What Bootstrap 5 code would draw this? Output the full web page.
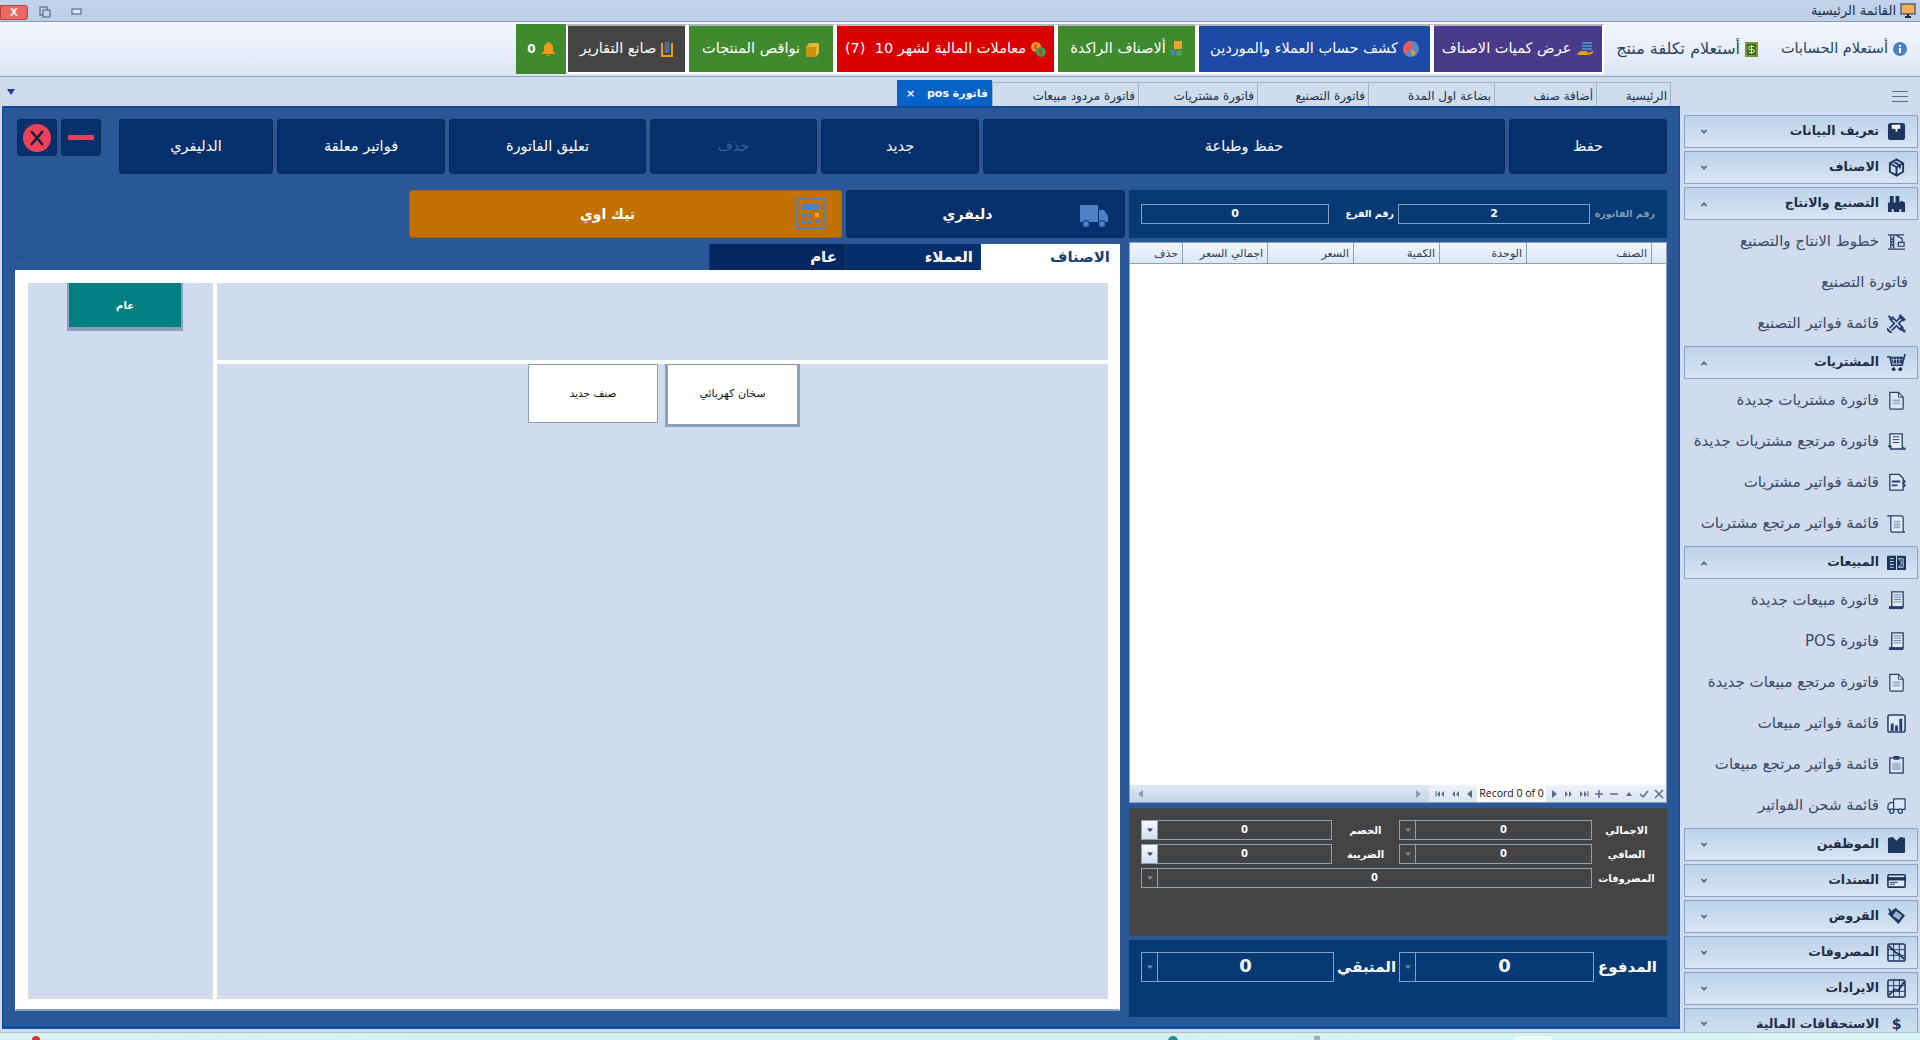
<!doctype html>
<html lang="ar" dir="rtl">
<head>
<meta charset="utf-8">
<title>القائمة الرئيسية</title>
<link href="https://cdn.jsdelivr.net/npm/bootstrap@5.3.0/dist/css/bootstrap.min.css" rel="stylesheet">
<style>
html, body { width: 1920px; height: 1040px; overflow: hidden; }
body { background: #d0dcee; font-family: "DejaVu Sans", "Noto Sans", sans-serif; color: #2a3a5a; }

/* title bar */
.title-bar { height: 22px; background: linear-gradient(#c3d4ea, #bccfe7); border-bottom: 1px solid #8299b9; padding-right: 4px; font-size: 13px; color: #1d2d4a; }
.win-btns { direction: ltr; padding-top: 3px; gap: 11px; }
.win-close { width: 28px; height: 15px; background: #e86a62; border: 1px solid #b8433c; border-radius: 0 3px 3px 0; color: #fff; line-height: 12px; text-align: center; font-size: 11px; font-family: "Liberation Sans", sans-serif; font-weight: 700; }

/* ribbon */
.ribbon { height: 55px; background: linear-gradient(#f4f8fe, #e6eef9 60%, #d9e4f2); border-bottom: 1px solid #8aa0bf; padding-right: 13px; align-items: center; }
.rb-plain { font-size: 14.5px; color: #2b3f5f; gap: 5px; white-space: nowrap; }
.rb-1 { width: 126px; margin-left: 23px; }
.rb-2 { width: 144px; margin-left: 10px; font-size: 16px; }
.rb-btn { height: 50px; color: #fff; font-size: 14.5px; gap: 5px; border: 2px solid #fff; border-top-color: #b5b5b5; white-space: nowrap; justify-content: center; align-items: center; }
.rb-purple { width: 172px; background: #4a3b8a; }
.rb-blue { width: 235px; background: #1c4aa5; }
.rb-green { width: 141px; background: #3f8a2f; }
.rb-red { width: 221px; background: #d80000; }
.rb-green2 { width: 148px; background: #3f8a2f; }
.rb-dark { width: 121px; background: #444; }
.rb-bell { width: 50px; height: 50px; background: #3f8a2f; color: #fff; font-size: 12px; font-weight: 700; gap: 6px; justify-content: center; align-items: center; }

/* work area */
.work-area { height: 955px; }
.main-col { width: 1680px; margin-right: 4px; }
.tabs-strip { height: 29px; align-items: flex-end; padding-right: 9px; }
.tab-strip-end { margin-right: auto; align-self: center; padding-left: 6px; color: #1f3f9a; display: flex; }
.doc-tab { height: 24px; font-size: 12px; color: #20304c; background: #cfdcec; border: 1px solid #9fb2cc; border-bottom: 0; border-right-width: 0; padding: 4px 3px 0 0; white-space: nowrap; }
.doc-tab:first-child { border-right-width: 1px; }
.dt-1 { width: 75px; } .dt-2 { width: 102px; } .dt-3 { width: 126px; } .dt-4 { width: 111px; } .dt-5 { width: 119px; } .dt-6 { width: 146px; }
.doc-tab-on { width: 95px; height: 26px; background: #0563c8; color: #fff; font-weight: 700; font-size: 11px; border: 0; padding: 6px 4px 0 9px; }
.main-panel { height: 923px; background: #2a5795; border: 1px solid #0f4c9f; border-top-width: 2px; border-bottom-width: 3px; padding: 11px 12px 0 12px; margin-left: 2px; }

/* dark buttons */
.tool-row { gap: 4px; height: 55px; margin-bottom: 16px; }
.tool-btn { background: #05306b; color: #fff; border: 1px solid #0a2a5a; border-radius: 3px; font-size: 14.5px; display: flex; align-items: center; justify-content: center; white-space: nowrap; }
.tb-save { width: 158px; } .tb-print { width: 522px; } .tb-new { width: 158px; } .tb-del { width: 167px; color: #35659f; }
.tb-hold { width: 197px; } .tb-held { width: 168px; } .tb-deliv { width: 154px; }
.tb-sq { width: 40px; height: 37px; margin-right: 14px; }
.tb-sq + .tb-sq { margin-right: 0; }

.right-col { width: 538px; gap: 4px; }
.left-col { width: 1110px; margin-right: 4px; }

.inv-box { height: 48px; background: #063a74; color: #fff; padding-right: 12px; align-items: center; font-size: 9.5px; font-weight: 700; }
.inv-lbl1 { width: 65px; color: #8398b3; white-space: nowrap; }
.inv-lbl2 { width: 69px; padding-right: 4px; white-space: nowrap; }
.val-box { border: 1px solid #8aa0bf; color: #fff; text-align: center; font-weight: 700; font-size: 11px; height: 20px; line-height: 18px; font-family: "DejaVu Sans", sans-serif; }
.vb-192 { width: 192px; } .vb-188 { width: 188px; }

.grid-box { height: 561px; background: #fff; border: 1px solid #8aa0bf; }
.grid-head { height: 21px; background: linear-gradient(#f2f6fc, #dce7f5); border-bottom: 1px solid #8aa0bf; font-size: 11px; color: #2a3a5a; }
.gh-cell { border-left: 1px solid #8aa0bf; padding: 3px 4px 0 0; white-space: nowrap; }
.gh-ind { width: 15px; } .gh-item { width: 125px; } .gh-unit { width: 87px; } .gh-qty { width: 86px; } .gh-price { width: 86px; } .gh-total { width: 85px; }
.gh-del { flex-grow: 1; border-left: 0; }
.grid-nav { height: 17px; margin-top: auto; direction: ltr; background: linear-gradient(#dfe8f5, #c5d4e8); color: #5a6c88; }
.nav-scroll { flex-grow: 1; padding: 0 6px; justify-content: space-between; color: #8a9ab2; }
.nav-btns { background: linear-gradient(#eef3fa, #d9e4f2); padding-left: 3px; }
.nav-ico { width: 15px; display: flex; justify-content: center; align-items: center; }
.nav-rec { width: 69px; background: #fff; color: #111; font-family: "Open Sans", sans-serif; font-size: 10.5px; text-align: center; line-height: 17px; white-space: nowrap; }

.totals-box { height: 128px; background: #444; color: #fff; padding: 12px 0 0 12px; margin-top: 1px; gap: 4px; font-size: 10px; font-weight: 700; }
.pay-box { height: 77px; background: #063a74; color: #fff; padding: 12px 0 0 12px; font-size: 15px; font-weight: 700; }
.sum-row { height: 20px; align-items: center; }
.lbl-r { width: 75px; padding-right: 6px; text-align: center; white-space: nowrap; }
.lbl-m { width: 67px; text-align: center; white-space: nowrap; }
.spin-box { display: flex; border: 1px solid #8aa0bf; height: 20px; font-size: 10px; }
.spin-val { flex-grow: 1; text-align: center; line-height: 18px; }
.spin-drop { width: 16px; border-right: 1px solid #8aa0bf; display: flex; align-items: center; justify-content: center; color: #7f8b99; }
.spin-on { background: linear-gradient(#f5f8fd, #d3dff0); color: #33445f; }
.sb-193 { width: 193px; } .sb-191 { width: 191px; } .sb-451 { width: 451px; }
.pay-box .spin-box { height: 30px; font-size: 18px; }
.pay-box .spin-val { line-height: 26px; }
.pay-box .lbl-r { width: 73px; }
.pay-box .lbl-m { width: 65px; }
.pay-box .sum-row { height: 30px; }
.sb-195 { width: 195px; } .sb-193b { width: 193px; }

/* buttons above the pos tabs */
.mode-row { gap: 4px; height: 48px; }
.mode-deliv { width: 279px; font-size: 14px; font-weight: 700; position: relative; padding-right: 36px; }
.mode-take { width: 433px; background: #c27000; border-color: #a96300; font-size: 14px; font-weight: 700; position: relative; padding-right: 36px; }
.mode-ico { position: absolute; right: 15px; top: 9px; }
.mode-take .mode-ico { right: 15px; top: 7px; }
.dots-mark { position: absolute; right: 1092px; bottom: 9px; color: #2148a8; font-size: 10px; line-height: 1; }

.pos-tabs { height: 26px; margin-top: 6px; margin-right: 5px; font-size: 15px; font-weight: 700; position: relative; }
.pos-tab { background: #04285f; color: #fff; padding: 0 8px 0 0; border-left: 1px solid #0a3a7c; white-space: nowrap; line-height: 26px; }
.ptab-a { width: 140px; background: #fff; color: #1d3f75; padding-right: 10px; }
.ptab-b { width: 135px; background: #052f6a; padding-right: 7px; }
.ptab-c { width: 136px; }

.pos-panel { height: 741px; margin-right: 5px; background: #fff; border: 1px solid #fff; border-bottom: 2px solid #8aa0bf; padding: 12px 11px 10px 12px; gap: 4px; }
.pos-items { width: 891px; gap: 4px; }
.pos-top { height: 77px; background: #d0dcee; }
.pos-low { flex-grow: 1; background: #d0dcee; padding-left: 3px; gap: 7px; }
.pos-cats { width: 185px; background: #d0dcee; padding-left: 9px; }
.cat-btn { width: 116px; height: 48px; background: #008080; color: #fff; border: 2px solid #8aa0bf; border-top: 0; border-bottom-width: 4px; font-size: 10px; font-weight: 700; display: flex; align-items: center; justify-content: center; }
.prod-btn { background: #fff; border: 1px solid #8aa0bf; font-size: 11px; color: #111; display: flex; align-items: center; justify-content: center; white-space: nowrap; }
.prod-new { width: 130px; height: 59px; font-size: 10.5px; }
.prod-sel { width: 135px; height: 63px; border-width: 0 3px 3px 3px; border-top: 1px solid #8aa0bf; box-shadow: inset 0 0 0 1px #fff; }

/* sidebar */
.side-col { width: 234px; margin-right: 2px; }
.side-top { height: 38px; flex-shrink: 0; direction: ltr; padding-top: 14px; justify-content: flex-end; }
.burger { width: 16px; height: 11px; border-top: 1px solid #5a6c88; border-bottom: 1px solid #5a6c88; position: relative; margin-right: 10px; }
.burger::after { content: ""; position: absolute; left: 0; right: 0; top: 4px; border-top: 1px solid #5a6c88; }
.side-head { height: 33px; margin-bottom: 3px; flex-shrink: 0; background: linear-gradient(#bcd2ea, #d8e6f4); border: 1px solid #8ca2c4; color: #1f2c45; font-size: 12.5px; font-weight: 700; padding-right: 11px; align-items: center; gap: 8px; white-space: nowrap; }
.side-open { margin-bottom: 1px; }
.side-tail { height: 24px; margin-bottom: 0; border-bottom: 0; padding-top: 7px; line-height: 1; background: linear-gradient(#bcd2ea, #cfdff0); }
.side-chev { margin-right: auto; padding-left: 15px; color: #56657f; display: flex; }
.side-item { height: 41px; flex-shrink: 0; font-size: 15px; color: #3a4a68; align-items: center; gap: 8px; padding-right: 12px; white-space: nowrap; }
.side-item-last { margin-bottom: 2px; }
.side-ico { color: #24406e; flex-shrink: 0; }
.side-head .side-ico { color: #1e3560; }
.side-dollar { width: 19px; font-size: 14px; line-height: 14px; text-align: center; }
.no-ico { padding-right: 10px; }
.bottom-strip { height: 8px; background: linear-gradient(90deg, #d6f1f0, #cff2ee 50%, #d8f3f3); border-top: 1px solid #aebfcc; position: relative; overflow: hidden; }
.tray { position: absolute; top: 3px; }
.tray-a { right: 1880px; width: 8px; height: 6px; background: #d9332e; border-radius: 4px 4px 0 0; }
.tray-b { right: 742px; width: 10px; height: 6px; background: #2a8a96; border-radius: 5px 5px 0 0; }
.tray-c { right: 600px; width: 6px; height: 6px; background: #a3aeb4; }
.tray-d { right: 368px; width: 38px; height: 6px; background: #eef9f9; border-radius: 4px 4px 0 0; }
</style>
</head>
<body class="d-flex flex-column">

<svg width="0" height="0" class="position-absolute">
  <symbol id="chev-d" viewBox="0 0 8 8"><path d="M1 2l3 3.5L7 2 4 3.5z" fill="currentColor" stroke="currentColor"/></symbol>
  <symbol id="chev-u" viewBox="0 0 8 8"><path d="M1 6l3-3.5L7 6 4 4.5z" fill="currentColor" stroke="currentColor"/></symbol>
  <symbol id="tri-d" viewBox="0 0 8 8"><path d="M1 2.5h6L4 6z" fill="currentColor"/></symbol>
  <symbol id="i-book" viewBox="0 0 20 20"><rect x="1" y="1" width="18" height="18" rx="3" fill="currentColor"/><path d="M5 3h9v4h-3v3H9V7H5z" fill="#fff"/></symbol>
  <symbol id="i-box" viewBox="0 0 20 20"><path d="M10 1.500l7 4v9l-7 4-7-4v-9zM3 5.500l7 4.200 7-4.200M10 9.700v8.800M6.500 3.500l7 4.200V11" fill="none" stroke="currentColor" stroke-width="2"/></symbol>
  <symbol id="i-factory" viewBox="0 0 20 20"><path d="M1 19V9h2V2h4v7h2V2h4v7l2-2 4 2v10h-4v-3h-2v3H7v-3H5v3z" fill="currentColor"/></symbol>
  <symbol id="i-crane" viewBox="0 0 20 20"><path d="M1 3h17M4 3v14M7 3v14M4 6l3 3-3 3 3 3M9 3l7 4v3M12 11h6v4h-6zM1 18h18" fill="none" stroke="currentColor" stroke-width="1.300"/></symbol>
  <symbol id="i-tools" viewBox="0 0 20 20"><path d="M4 4l12 12M16 4L4 16" stroke="currentColor" stroke-width="5" fill="none"/><path d="M4 4l12 12M16 4L4 16" stroke="#d0dcee" stroke-width="1.600" fill="none"/><path d="M14 0l6 6-3 2-5-5zM0 14l6 6-3 0-3-3zM2 1l5 5-2 1-4-4zM15 13l5 5-2 2-5-5z" fill="currentColor"/></symbol>
  <symbol id="i-cart" viewBox="0 0 20 20"><path d="M0 4h3l2 9h11l3-12" fill="none" stroke="currentColor" stroke-width="1.600"/><path d="M4 4h13l-1 7H6z" fill="currentColor"/><path d="M7 5v6M10 5v6M13 5v6M5 7h11" stroke="#d0dcee" stroke-width=".7"/><circle cx="7" cy="17" r="2" fill="currentColor"/><circle cx="14" cy="17" r="2" fill="currentColor"/></symbol>
  <symbol id="i-doc" viewBox="0 0 20 20"><path d="M3 1.500h9l5 5V18a1 1 0 0 1-1 1H4a1 1 0 0 1-1-1z" fill="#dfe8f5" stroke="currentColor" stroke-width="1.300"/><path d="M12 1.500v5h5" fill="none" stroke="currentColor"/><path d="M6 9h8v2H6zM6 12h8v2H6z" fill="#9aabc4"/></symbol>
  <symbol id="i-roll" viewBox="0 0 20 20"><path d="M3 17V2h13v15" fill="#e4ecf7" stroke="currentColor" stroke-width="1.400"/><path d="M6 5h7M6 8h7M6 11h7" stroke="currentColor" stroke-width="1"/><path d="M1 15h3v3h15l-2-2" fill="none" stroke="currentColor" stroke-width="1.600"/></symbol>
  <symbol id="i-cut" viewBox="0 0 20 20"><path d="M3 1.500h10l4 4V18H3z" fill="#dfe8f5" stroke="currentColor" stroke-width="1.400"/><path d="M5 8h9v2H5zM5 12h6v2H5z" fill="currentColor"/><path d="M17 7l2 2-2 2 2 2-2 2" fill="none" stroke="currentColor" stroke-width="1.500"/></symbol>
  <symbol id="i-scroll" viewBox="0 0 20 20"><path d="M1 2h14a2 2 0 0 1 2 2v13a2 2 0 0 0 2 2H6a2 2 0 0 1-2-2V4a2 2 0 0 0-3-2z" fill="#e4ecf7" stroke="currentColor" stroke-width="1.300"/><path d="M7 7h7v2H7zM7 10h7v2H7zM7 13h7v2H7z" fill="#9aabc4"/></symbol>
  <symbol id="i-sales" viewBox="0 0 20 20"><rect x="0" y="3" width="20" height="15" rx="1" fill="currentColor"/><path d="M3 6h4M3 9h4M3 12h4M3 15h4M12 6h5v9h-5l3-3V9z" stroke="#d0dcee" fill="none"/><path d="M10 3v15" stroke="#d0dcee"/></symbol>
  <symbol id="i-rcpt" viewBox="0 0 20 20"><path d="M5 1h12v16H5z" fill="#e4ecf7" stroke="currentColor" stroke-width="1.400"/><path d="M7 4h8M7 6.500h8M7 9h8M7 11.500h8" stroke="#6c7f9c"/><path d="M2 16h15v3H2z" fill="currentColor"/></symbol>
  <symbol id="i-bars" viewBox="0 0 20 20"><rect x="1" y="1" width="18" height="18" rx="2" fill="#dfe8f5" stroke="currentColor" stroke-width="1.600"/><path d="M4 10h3v8H4zM8.500 12h3v6h-3zM13 5h3v13h-3z" fill="currentColor"/></symbol>
  <symbol id="i-clip" viewBox="0 0 20 20"><rect x="3" y="3" width="14" height="16" fill="#dfe8f5" stroke="currentColor" stroke-width="1.400"/><path d="M7 1h6v4H7z" fill="currentColor"/><path d="M5.500 8h9v8h-9z" fill="#a9b8cf"/></symbol>
  <symbol id="i-truck" viewBox="0 0 20 20"><path d="M7 3h12v11H7zM7 7H3L1 10v4h6z" fill="#dfe8f5" stroke="currentColor" stroke-width="1.300"/><circle cx="5" cy="16" r="2.200" fill="#dfe8f5" stroke="currentColor" stroke-width="1.400"/><circle cx="14" cy="16" r="2.200" fill="#dfe8f5" stroke="currentColor" stroke-width="1.400"/></symbol>
  <symbol id="i-shirt" viewBox="0 0 20 20"><path d="M2 3l4-1 4 4 4-4 4 1a1 1 0 0 1 1 1v14a1 1 0 0 1-1 1H2a1 1 0 0 1-1-1V4a1 1 0 0 1 1-1z" fill="currentColor"/></symbol>
  <symbol id="i-card" viewBox="0 0 20 20"><rect x="1" y="4" width="18" height="13" rx="1" fill="#dfe8f5" stroke="currentColor" stroke-width="1.700"/><path d="M1 7h18v2.500H1zM3 12h8M3 14h5" stroke="currentColor" fill="currentColor"/></symbol>
  <symbol id="i-tag" viewBox="0 0 20 20"><path d="M1 7l8-6 10 8-7 9z" fill="currentColor"/><path d="M4 3L1 1l3 8z" fill="currentColor"/><rect x="7" y="6" width="8" height="6" transform="rotate(35 11 9)" fill="#9fb3d0"/></symbol>
  <symbol id="i-grid1" viewBox="0 0 20 20"><rect x="1" y="1" width="18" height="18" rx="2" fill="none" stroke="currentColor" stroke-width="1.600"/><path d="M7 1v18M13 1v18M1 7h18M1 13h18" stroke="currentColor"/><path d="M2 3l7 7 4 2 5 5" fill="none" stroke="currentColor" stroke-width="2"/></symbol>
  <symbol id="i-grid2" viewBox="0 0 20 20"><rect x="1" y="1" width="18" height="18" rx="2" fill="none" stroke="currentColor" stroke-width="1.600"/><path d="M7 1v18M13 1v18M1 7h18M1 13h18" stroke="currentColor"/><path d="M2 17l6-6 4 1 6-9" fill="none" stroke="currentColor" stroke-width="2"/></symbol>
  <symbol id="nv-first" viewBox="0 0 10 10"><path d="M1 2v6" stroke="currentColor"/><path d="M5 2v6L2 5zM9 2v6L6 5z" fill="currentColor"/></symbol>
  <symbol id="nv-pprev" viewBox="0 0 10 10"><path d="M5 2v6L2 5zM9 2v6L6 5z" fill="currentColor"/></symbol>
  <symbol id="nv-prev" viewBox="0 0 10 10"><path d="M7 1v8L2 5z" fill="currentColor"/></symbol>
  <symbol id="nv-next" viewBox="0 0 10 10"><path d="M3 1v8l5-4z" fill="currentColor"/></symbol>
  <symbol id="nv-pnext" viewBox="0 0 10 10"><path d="M1 2v6l3-3zM5 2v6l3-3z" fill="currentColor"/></symbol>
  <symbol id="nv-last" viewBox="0 0 10 10"><path d="M1 2v6l3-3zM5 2v6l3-3z" fill="currentColor"/><path d="M9 2v6" stroke="currentColor"/></symbol>
</svg>

<div class="title-bar d-flex align-items-center">
  <svg width="16" height="16" viewBox="0 0 16 16" class="ms-1"><rect x="1" y="1" width="14" height="10" fill="#f2b05a" stroke="#1d2d4a"/><path d="M5 14h6M8 11v3" stroke="#1d2d4a" stroke-width="2"/></svg>
  <span>القائمة الرئيسية</span>
  <div class="win-btns d-flex me-auto align-items-center">
    <div class="win-close">X</div>
    <svg width="13" height="12" viewBox="0 0 13 12"><rect x="1" y="1" width="7" height="8" fill="none" stroke="#45566f"/><rect x="4" y="4" width="7" height="7" fill="#c3d4ea" stroke="#45566f"/></svg>
    <svg width="12" height="8" viewBox="0 0 12 8" class="ms-2"><rect x="1" y="1" width="9" height="5" fill="#dde6f2" stroke="#45566f"/></svg>
  </div>
</div>

<div class="ribbon d-flex">
  <div class="rb-plain rb-1 d-flex align-items-center">
    <svg width="14" height="14" viewBox="0 0 14 14" class="flex-shrink-0"><circle cx="7" cy="7" r="7" fill="#4b7fc6"/><path d="M6 3h2v2H6zM6 6h2v5H6z" fill="#fff"/></svg>
    <span>أستعلام الحسابات</span>
  </div>
  <div class="rb-plain rb-2 d-flex align-items-center">
    <svg width="13" height="15" viewBox="0 0 13 15" class="flex-shrink-0"><rect width="13" height="15" fill="#6f9a2e"/><rect x="2" y="2" width="9" height="11" fill="#3d6d1b"/><path d="M4 10.500h4a1 1 0 0 0 0-3H5a1 1 0 0 1 0-3h4M6.500 3v9" fill="none" stroke="#d8e8b0"/></svg>
    <span>أستعلام تكلفة منتج</span>
  </div>
  <div class="rb-btn rb-purple d-flex">
    <svg width="18" height="16" viewBox="0 0 18 16"><path d="M6 1h10v2H6zM6 4h10v2H6zM6 7h10v2H6z" fill="#4f83c8"/><path d="M1 13c3-4 6-3 9-3 2 0 2 2 0 2h-2 4l5-2c1 2-2 4-7 4H3z" fill="#ef9a21"/></svg>
    <span>عرض كميات الاصناف</span>
  </div>
  <div class="rb-btn rb-blue d-flex">
    <svg width="16" height="16" viewBox="0 0 16 16"><circle cx="8" cy="8" r="8" fill="#5c89c4"/><path d="M8 8V0a8 8 0 0 0-6 13z" fill="#ec5a54"/><path d="M8 8l5 4-4 3z" fill="#f0a030"/></svg>
    <span>كشف حساب العملاء والموردين</span>
  </div>
  <div class="rb-btn rb-green d-flex">
    <svg width="12" height="16" viewBox="0 0 12 16"><rect x="3" y="0" width="8" height="8" fill="#f0a32e"/><rect x="0" y="9" width="4" height="5" fill="#4f83c8"/><circle cx="8" cy="12" r="3" fill="#44a060"/></svg>
    <span>ألاصناف الراكدة</span>
  </div>
  <div class="rb-btn rb-red d-flex">
    <svg width="15" height="15" viewBox="0 0 15 15"><circle cx="5" cy="5" r="5" fill="#f0a020"/><circle cx="10" cy="10" r="5" fill="#3f9a50"/><path d="M7 3H4v4h3M3 5h3M11 8h-2v2h2v2H9M10 7v6" fill="none" stroke="#c33" stroke-width="1"/></svg>
    <span>معاملات المالية لشهر 10 &nbsp;(7)</span>
  </div>
  <div class="rb-btn rb-green2 d-flex">
    <svg width="15" height="15" viewBox="0 0 15 15"><path d="M1 5h10v10H1z" fill="#c8930f"/><path d="M1 5l3-4h10l-3 4zM11 5l3-4v10l-3 4z" fill="#e2b83a"/></svg>
    <span>نواقص المنتجات</span>
  </div>
  <div class="rb-btn rb-dark d-flex">
    <svg width="12" height="15" viewBox="0 0 12 15"><path d="M1 1v13h10V1" fill="none" stroke="#f29a17" stroke-width="2"/><rect x="3.500" y="0" width="5" height="11" fill="#4f6d99"/></svg>
    <span>صانع التقارير</span>
  </div>
  <div class="rb-bell d-flex">
    <svg width="13" height="14" viewBox="0 0 13 14"><path d="M6.500 0c1 0 1.500.6 1.500 1.300C10.500 2 11 4 11 6v3l2 2v1H0v-1l2-2V6c0-2 .5-4 3-4.700C5 .6 5.500 0 6.500 0zM5 13h3a1.500 1 0 0 1-3 0z" fill="#f29a17"/></svg>
    <span>0</span>
  </div>
</div>

<div class="work-area d-flex">
  <div class="side-col d-flex flex-column overflow-hidden">
    <div class="side-top d-flex"><div class="burger"></div></div>
    <div class="side-head d-flex"><svg class="side-ico" width="19" height="19"><use href="#i-book"/></svg><span>تعريف البيانات</span><span class="side-chev"><svg width="8" height="8"><use href="#chev-d"/></svg></span></div>
    <div class="side-head d-flex"><svg class="side-ico" width="19" height="19"><use href="#i-box"/></svg><span>الاصناف</span><span class="side-chev"><svg width="8" height="8"><use href="#chev-d"/></svg></span></div>
    <div class="side-head side-open d-flex"><svg class="side-ico" width="19" height="19"><use href="#i-factory"/></svg><span>التصنيع والانتاج</span><span class="side-chev"><svg width="8" height="8"><use href="#chev-u"/></svg></span></div>
    <div class="side-item d-flex"><svg class="side-ico" width="19" height="19"><use href="#i-crane"/></svg><span>خطوط الانتاج والتصنيع</span></div>
    <div class="side-item d-flex no-ico"><span>فاتورة التصنيع</span></div>
    <div class="side-item side-item-last d-flex"><svg class="side-ico" width="19" height="19"><use href="#i-tools"/></svg><span>قائمة فواتير التصنيع</span></div>
    <div class="side-head side-open d-flex"><svg class="side-ico" width="19" height="19"><use href="#i-cart"/></svg><span>المشتريات</span><span class="side-chev"><svg width="8" height="8"><use href="#chev-u"/></svg></span></div>
    <div class="side-item d-flex"><svg class="side-ico" width="19" height="19"><use href="#i-doc"/></svg><span>فاتورة مشتريات جديدة</span></div>
    <div class="side-item d-flex"><svg class="side-ico" width="19" height="19"><use href="#i-roll"/></svg><span>فاتورة مرتجع مشتريات جديدة</span></div>
    <div class="side-item d-flex"><svg class="side-ico" width="19" height="19"><use href="#i-cut"/></svg><span>قائمة فواتير مشتريات</span></div>
    <div class="side-item side-item-last d-flex"><svg class="side-ico" width="19" height="19"><use href="#i-scroll"/></svg><span>قائمة فواتير مرتجع مشتريات</span></div>
    <div class="side-head side-open d-flex"><svg class="side-ico" width="19" height="19"><use href="#i-sales"/></svg><span>المبيعات</span><span class="side-chev"><svg width="8" height="8"><use href="#chev-u"/></svg></span></div>
    <div class="side-item d-flex"><svg class="side-ico" width="19" height="19"><use href="#i-rcpt"/></svg><span>فاتورة مبيعات جديدة</span></div>
    <div class="side-item d-flex"><svg class="side-ico" width="19" height="19"><use href="#i-rcpt"/></svg><span>فاتورة POS</span></div>
    <div class="side-item d-flex"><svg class="side-ico" width="19" height="19"><use href="#i-doc"/></svg><span>فاتورة مرتجع مبيعات جديدة</span></div>
    <div class="side-item d-flex"><svg class="side-ico" width="19" height="19"><use href="#i-bars"/></svg><span>قائمة فواتير مبيعات</span></div>
    <div class="side-item d-flex"><svg class="side-ico" width="19" height="19"><use href="#i-clip"/></svg><span>قائمة فواتير مرتجع مبيعات</span></div>
    <div class="side-item side-item-last d-flex"><svg class="side-ico" width="19" height="19"><use href="#i-truck"/></svg><span>قائمة شحن الفواتير</span></div>
    <div class="side-head d-flex"><svg class="side-ico" width="19" height="19"><use href="#i-shirt"/></svg><span>الموظفين</span><span class="side-chev"><svg width="8" height="8"><use href="#chev-d"/></svg></span></div>
    <div class="side-head d-flex"><svg class="side-ico" width="19" height="19"><use href="#i-card"/></svg><span>السندات</span><span class="side-chev"><svg width="8" height="8"><use href="#chev-d"/></svg></span></div>
    <div class="side-head d-flex"><svg class="side-ico" width="19" height="19"><use href="#i-tag"/></svg><span>القروض</span><span class="side-chev"><svg width="8" height="8"><use href="#chev-d"/></svg></span></div>
    <div class="side-head d-flex"><svg class="side-ico" width="19" height="19"><use href="#i-grid1"/></svg><span>المصروفات</span><span class="side-chev"><svg width="8" height="8"><use href="#chev-d"/></svg></span></div>
    <div class="side-head d-flex"><svg class="side-ico" width="19" height="19"><use href="#i-grid2"/></svg><span>الايرادات</span><span class="side-chev"><svg width="8" height="8"><use href="#chev-d"/></svg></span></div>
    <div class="side-head side-tail d-flex"><span class="side-ico side-dollar fw-bold">$</span><span>الاستحقاقات المالية</span><span class="side-chev"><svg width="8" height="8"><use href="#chev-d"/></svg></span></div>
  </div>

  <div class="main-col d-flex flex-column">
    <div class="tabs-strip d-flex">
      <div class="doc-tab dt-1">الرئيسية</div>
      <div class="doc-tab dt-2">أضافة صنف</div>
      <div class="doc-tab dt-3">بضاعة اول المدة</div>
      <div class="doc-tab dt-4">فاتورة التصنيع</div>
      <div class="doc-tab dt-5">فاتورة مشتريات</div>
      <div class="doc-tab dt-6">فاتورة مردود مبيعات</div>
      <div class="doc-tab doc-tab-on d-flex justify-content-between"><span>فاتورة pos</span><span>×</span></div>
      <div class="tab-strip-end"><svg width="10" height="8" viewBox="0 0 10 8"><path d="M1 1h8L5 7z" fill="currentColor"/></svg></div>
    </div>
    <div class="main-panel">
      <div class="tool-row d-flex">
        <div class="tool-btn tb-save">حفظ</div>
        <div class="tool-btn tb-print">حفظ وطباعة</div>
        <div class="tool-btn tb-new">جديد</div>
        <div class="tool-btn tb-del">حذف</div>
        <div class="tool-btn tb-hold">تعليق الفاتورة</div>
        <div class="tool-btn tb-held">فواتير معلقة</div>
        <div class="tool-btn tb-deliv">الدليفري</div>
        <div class="tool-btn tb-sq"><svg width="26" height="6" viewBox="0 0 26 6"><rect width="26" height="5" fill="#e8405c"/></svg></div>
        <div class="tool-btn tb-sq"><svg width="28" height="28" viewBox="0 0 28 28"><circle cx="14" cy="14" r="14" fill="#ee4058"/><path d="M8 7l12 14M20 7L8 21" stroke="#10203a" stroke-width="2.500"/></svg></div>
      </div>
      <div class="d-flex">
        <div class="right-col d-flex flex-column">
          <div class="inv-box d-flex">
            <span class="inv-lbl1">رقم الفاتورة</span>
            <div class="val-box vb-192">2</div>
            <span class="inv-lbl2">رقم الفرع</span>
            <div class="val-box vb-188">0</div>
          </div>
          <div class="grid-box d-flex flex-column">
            <div class="grid-head d-flex">
              <div class="gh-cell gh-ind"></div>
              <div class="gh-cell gh-item">الصنف</div>
              <div class="gh-cell gh-unit">الوحدة</div>
              <div class="gh-cell gh-qty">الكمية</div>
              <div class="gh-cell gh-price">السعر</div>
              <div class="gh-cell gh-total">اجمالي السعر</div>
              <div class="gh-cell gh-del">حذف</div>
            </div>
            <div class="grid-nav d-flex">
              <div class="nav-scroll d-flex align-items-center">
                <svg width="10" height="10"><use href="#nv-prev"/></svg>
                <svg width="10" height="10"><use href="#nv-next"/></svg>
              </div>
              <div class="nav-btns d-flex">
                <span class="nav-ico"><svg width="10" height="10"><use href="#nv-first"/></svg></span>
                <span class="nav-ico"><svg width="10" height="10"><use href="#nv-pprev"/></svg></span>
                <span class="nav-ico"><svg width="10" height="10"><use href="#nv-prev"/></svg></span>
                <span class="nav-rec">Record 0 of 0</span>
                <span class="nav-ico"><svg width="10" height="10"><use href="#nv-next"/></svg></span>
                <span class="nav-ico"><svg width="10" height="10"><use href="#nv-pnext"/></svg></span>
                <span class="nav-ico"><svg width="10" height="10"><use href="#nv-last"/></svg></span>
                <span class="nav-ico"><svg width="10" height="10" viewBox="0 0 10 10"><path d="M5 1v8M1 5h8" stroke="currentColor" stroke-width="1.500"/></svg></span>
                <span class="nav-ico"><svg width="10" height="10" viewBox="0 0 10 10"><path d="M1 5h8" stroke="currentColor" stroke-width="1.500"/></svg></span>
                <span class="nav-ico"><svg width="10" height="10" viewBox="0 0 10 10"><path d="M2 7h6L5 3z" fill="currentColor"/></svg></span>
                <span class="nav-ico"><svg width="10" height="10" viewBox="0 0 10 10"><path d="M1 5l3 3 5-6" fill="none" stroke="currentColor" stroke-width="1.500"/></svg></span>
                <span class="nav-ico"><svg width="10" height="10" viewBox="0 0 10 10"><path d="M1 1l8 8M9 1L1 9" stroke="currentColor" stroke-width="1.500"/></svg></span>
              </div>
            </div>
          </div>
          <div class="totals-box d-flex flex-column">
            <div class="sum-row d-flex">
              <span class="lbl-r">الاجمالي</span>
              <div class="spin-box sb-193"><span class="spin-val">0</span><span class="spin-drop"><svg width="8" height="8"><use href="#tri-d"/></svg></span></div>
              <span class="lbl-m">الخصم</span>
              <div class="spin-box sb-191"><span class="spin-val">0</span><span class="spin-drop spin-on"><svg width="8" height="8"><use href="#tri-d"/></svg></span></div>
            </div>
            <div class="sum-row d-flex">
              <span class="lbl-r">الصافي</span>
              <div class="spin-box sb-193"><span class="spin-val">0</span><span class="spin-drop"><svg width="8" height="8"><use href="#tri-d"/></svg></span></div>
              <span class="lbl-m">الضريبة</span>
              <div class="spin-box sb-191"><span class="spin-val">0</span><span class="spin-drop spin-on"><svg width="8" height="8"><use href="#tri-d"/></svg></span></div>
            </div>
            <div class="sum-row d-flex">
              <span class="lbl-r">المصروفات</span>
              <div class="spin-box sb-451"><span class="spin-val">0</span><span class="spin-drop"><svg width="8" height="8"><use href="#tri-d"/></svg></span></div>
            </div>
          </div>
          <div class="pay-box">
            <div class="sum-row d-flex">
              <span class="lbl-r">المدفوع</span>
              <div class="spin-box sb-195"><span class="spin-val">0</span><span class="spin-drop"><svg width="8" height="8"><use href="#tri-d"/></svg></span></div>
              <span class="lbl-m">المتبقي</span>
              <div class="spin-box sb-193b"><span class="spin-val">0</span><span class="spin-drop"><svg width="8" height="8"><use href="#tri-d"/></svg></span></div>
            </div>
          </div>
        </div>

        <div class="left-col d-flex flex-column">
          <div class="mode-row d-flex">
            <div class="tool-btn mode-deliv">
              <svg class="mode-ico" width="30" height="30" viewBox="0 0 30 30"><path d="M1 5h18v17H1zM20 10h5l4 6v6h-9z" fill="#4f7fc6"/><circle cx="7" cy="24" r="3.500" fill="#4f7fc6" stroke="#05306b"/><circle cx="23" cy="24" r="3.500" fill="#4f7fc6" stroke="#05306b"/></svg>
              <span>دليفري</span>
            </div>
            <div class="tool-btn mode-take">
              <svg class="mode-ico" width="30" height="32" viewBox="0 0 30 32"><rect x="1" y="1" width="27" height="29" fill="none" stroke="#4f7fc6" stroke-width="2"/><rect x="6" y="6" width="17" height="6" fill="#4f7fc6"/><path d="M6 15h4v4H6zM12 15h4v4h-4zM6 22h4v4H6zM12 22h4v4h-4zM19 22h4v4h-4z" fill="#4f7fc6"/><rect x="19" y="15" width="4" height="4" fill="#f2a52a"/></svg>
              <span>تيك اوي</span>
            </div>
          </div>
          <div class="pos-tabs d-flex">
            <div class="pos-tab ptab-a">الاصناف</div>
            <div class="pos-tab ptab-b">العملاء</div>
            <div class="pos-tab ptab-c">عام</div>
            <span class="dots-mark">...</span>
          </div>
          <div class="pos-panel d-flex">
            <div class="pos-items d-flex flex-column">
              <div class="pos-top"></div>
              <div class="pos-low d-flex justify-content-center align-items-start">
                <div class="prod-btn prod-sel">سخان كهربائي</div>
                <div class="prod-btn prod-new">صنف جديد</div>
              </div>
            </div>
            <div class="pos-cats d-flex justify-content-center align-items-start">
              <div class="cat-btn">عام</div>
            </div>
          </div>
        </div>
      </div>
    </div>
  </div>
</div>

<div class="bottom-strip">
  <span class="tray tray-a"></span><span class="tray tray-b"></span><span class="tray tray-c"></span><span class="tray tray-d"></span>
</div>

<script src="https://cdn.jsdelivr.net/npm/bootstrap@5.3.0/dist/js/bootstrap.bundle.min.js"></script>
</body>
</html>
